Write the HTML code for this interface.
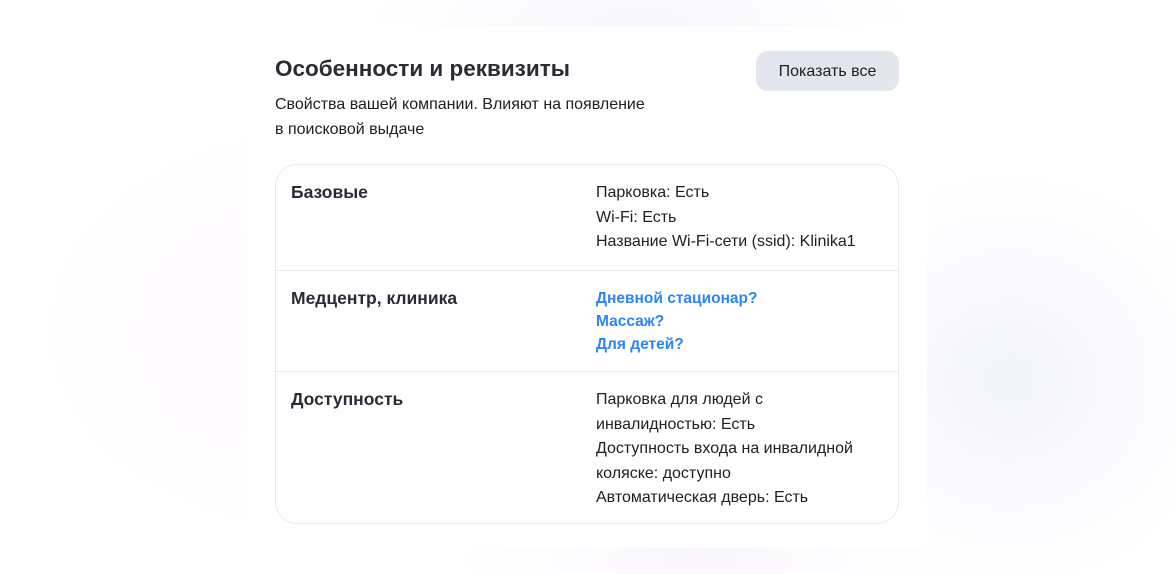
<!DOCTYPE html>
<html><head><meta charset="utf-8"><style>
html,body{margin:0;padding:0;width:1176px;height:574px;overflow:hidden;background:#fff;}
body{position:relative;font-family:"Liberation Sans",sans-serif;color:#21201f;
background:
radial-gradient(ellipse 420px 300px at 330px 330px,#fcf7fd 0%,rgba(255,255,255,0) 70%),
radial-gradient(ellipse 300px 280px at 1010px 380px,#f3f4fc 0%,rgba(255,255,255,0) 75%),
radial-gradient(ellipse 400px 200px at 640px 40px,#f7f6fc 0%,rgba(255,255,255,0) 70%),
radial-gradient(ellipse 350px 80px at 700px 560px,#faf6fc 0%,rgba(255,255,255,0) 70%),#fff;}
.card{position:absolute;left:248px;top:26px;width:679px;height:522px;background:#fff;}
.t{position:absolute;left:27px;top:30px;font-size:22.5px;font-weight:bold;color:#2b2a36;}
.s{position:absolute;left:27px;top:66px;font-size:16px;line-height:25px;color:#21201f;}
.btn{position:absolute;left:508px;top:25px;width:143px;height:40px;border-radius:12px;background:#e4e6ee;font-size:16px;line-height:42px;text-align:center;color:#21201f;}
.box{position:absolute;left:27px;top:138px;width:622px;height:358px;border:1px solid #e8e9ee;border-radius:22px;overflow:hidden;}
.row{position:absolute;left:0;width:622px;border-top:1px solid #ebecf0;}
.lab{position:absolute;left:15px;top:17px;font-size:17.5px;font-weight:bold;color:#2b2a36;}
.val{position:absolute;left:320px;top:16px;font-size:16px;line-height:24.5px;color:#21201f;}
.val.b{color:#2d84f7;font-weight:bold;font-size:15.5px;}
</style></head><body>
<div class="card">
<div class="t">Особенности и реквизиты</div>
<div class="btn">Показать все</div>
<div class="s">Свойства вашей компании. Влияют на появление<br>в поисковой выдаче</div>
<div class="box">
<div class="row" style="top:0;border-top:none;height:105px">
<div class="lab">Базовые</div>
<div class="val">Парковка: Есть<br>Wi-Fi: Есть<br>Название Wi-Fi-сети (ssid): Klinika1</div>
</div>
<div class="row" style="top:105px;height:101px">
<div class="lab">Медцентр, клиника</div>
<div class="val b" style="line-height:23px;top:16px">Дневной стационар?<br>Массаж?<br>Для детей?</div>
</div>
<div class="row" style="top:206px;height:152px">
<div class="lab">Доступность</div>
<div class="val">Парковка для людей с<br>инвалидностью: Есть<br>Доступность входа на инвалидной<br>коляске: доступно<br>Автоматическая дверь: Есть</div>
</div>
</div>
</div>
</body></html>
